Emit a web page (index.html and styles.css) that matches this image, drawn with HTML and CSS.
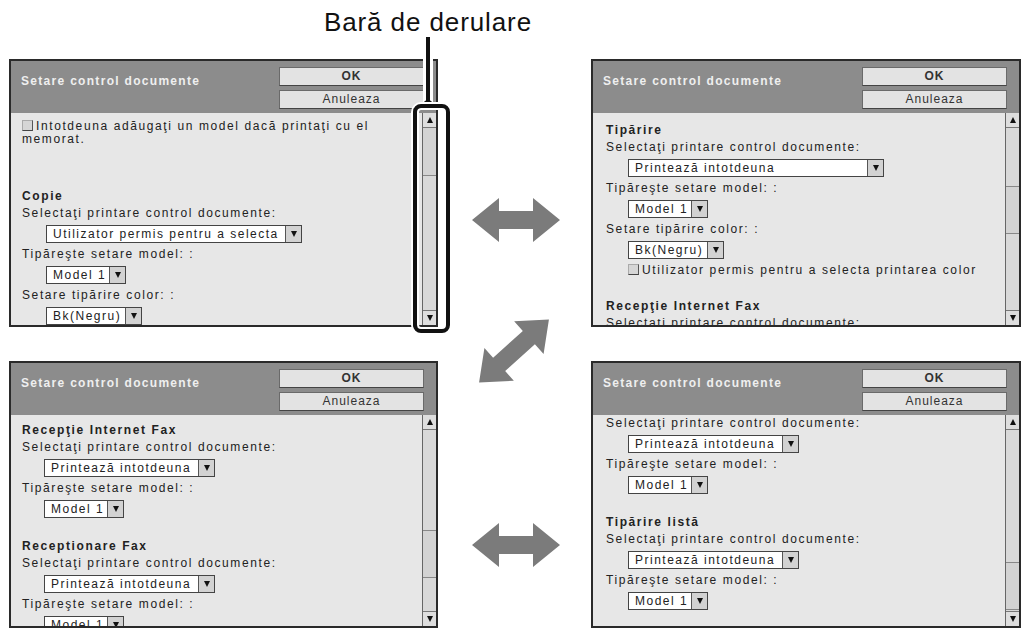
FILE: index.html
```html
<!DOCTYPE html>
<html>
<head>
<meta charset="utf-8">
<link rel="stylesheet" href="styles.css">
</head>
<body>
<div class="page">
  <!-- top-left -->
  <div class="panel tl">
    <div class="head">
      <div class="title">Setare control documente</div>
      <div class="btns"><div class="btn ok">OK</div><div class="btn">Anuleaza</div></div>
    </div>
    <div class="body">
      <div class="content">
        <div class="wrap"><span class="cb"></span>Intotdeuna adăugaţi un model dacă printaţi cu el memorat.</div>
        <div class="gap big"></div>
        <div class="h">Copie</div>
        <div class="l">Selectaţi printare control documente:</div>
        <div class="row"><div class="dd w255"><span class="v">Utilizator permis pentru a selecta</span><span class="a"><i class="tri dn"></i></span></div></div>
        <div class="l">Tipăreşte setare model: :</div>
        <div class="row"><div class="dd w80"><span class="v">Model 1</span><span class="a"><i class="tri dn"></i></span></div></div>
        <div class="l">Setare tipărire color: :</div>
        <div class="row"><div class="dd w95"><span class="v">Bk(Negru)</span><span class="a"><i class="tri dn"></i></span></div></div>
      </div>
      <div class="scroll">
        <div class="sb"><i class="tri up"></i></div>
        <div class="track"><div class="thumb t-tl"></div></div>
        <div class="sb"><i class="tri dn"></i></div>
      </div>
    </div>
    <div class="callout">
      <div class="clabel">Bară de derulare</div>
      <div class="cline"></div>
      <div class="cdot"></div>
      <div class="bracket"></div>
    </div>
  </div>

  <!-- middle arrows -->
  <div class="mid">
    <svg class="arr-h" width="88" height="44" viewBox="0 0 88 44"><polygon points="0,22 27,0 27,13 61,13 61,0 88,22 61,44 61,31 27,31 27,44" fill="#7b7b7b"/></svg>
    <svg class="arr-d" width="74" height="68" viewBox="0 0 74 68"><g transform="translate(37 34) rotate(-42)"><polygon points="-47,0 -20,-22 -20,-9 20,-9 20,-22 47,0 20,22 20,9 -20,9 -20,22" fill="#7b7b7b"/></g></svg>
    <svg class="arr-h2" width="88" height="44" viewBox="0 0 88 44"><polygon points="0,22 27,0 27,13 61,13 61,0 88,22 61,44 61,31 27,31 27,44" fill="#7b7b7b"/></svg>
  </div>

  <!-- top-right -->
  <div class="panel tr">
    <div class="head">
      <div class="title">Setare control documente</div>
      <div class="btns"><div class="btn ok">OK</div><div class="btn">Anuleaza</div></div>
    </div>
    <div class="body">
      <div class="content">
        <div class="h">Tipărire</div>
        <div class="l">Selectaţi printare control documente:</div>
        <div class="row"><div class="dd w255"><span class="v">Printează intotdeuna</span><span class="a"><i class="tri dn"></i></span></div></div>
        <div class="l">Tipăreşte setare model: :</div>
        <div class="row"><div class="dd w80"><span class="v">Model 1</span><span class="a"><i class="tri dn"></i></span></div></div>
        <div class="l">Setare tipărire color: :</div>
        <div class="row"><div class="dd w95"><span class="v">Bk(Negru)</span><span class="a"><i class="tri dn"></i></span></div></div>
        <div class="l ind"><span class="cb"></span>Utilizator permis pentru a selecta printarea color</div>
        <div class="gap"></div>
        <div class="h">Recepţie Internet Fax</div>
        <div class="l">Selectaţi printare control documente:</div>
      </div>
      <div class="scroll">
        <div class="sb"><i class="tri up"></i></div>
        <div class="track"><div class="thumb t-tr"></div></div>
        <div class="sb"><i class="tri dn"></i></div>
      </div>
    </div>
  </div>

  <!-- bottom-left -->
  <div class="panel bl">
    <div class="head">
      <div class="title">Setare control documente</div>
      <div class="btns"><div class="btn ok">OK</div><div class="btn">Anuleaza</div></div>
    </div>
    <div class="body">
      <div class="content">
        <div class="h">Recepţie Internet Fax</div>
        <div class="l">Selectaţi printare control documente:</div>
        <div class="row"><div class="dd w171"><span class="v">Printează intotdeuna</span><span class="a"><i class="tri dn"></i></span></div></div>
        <div class="l">Tipăreşte setare model: :</div>
        <div class="row"><div class="dd w80"><span class="v">Model 1</span><span class="a"><i class="tri dn"></i></span></div></div>
        <div class="gap"></div>
        <div class="h">Receptionare Fax</div>
        <div class="l">Selectaţi printare control documente:</div>
        <div class="row"><div class="dd w171"><span class="v">Printează intotdeuna</span><span class="a"><i class="tri dn"></i></span></div></div>
        <div class="l">Tipăreşte setare model: :</div>
        <div class="row"><div class="dd w80"><span class="v">Model 1</span><span class="a"><i class="tri dn"></i></span></div></div>
      </div>
      <div class="scroll">
        <div class="sb"><i class="tri up"></i></div>
        <div class="track"><div class="thumb t-bl"></div></div>
        <div class="sb"><i class="tri dn"></i></div>
      </div>
    </div>
  </div>

  <!-- bottom-right -->
  <div class="panel br">
    <div class="head">
      <div class="title">Setare control documente</div>
      <div class="btns"><div class="btn ok">OK</div><div class="btn">Anuleaza</div></div>
    </div>
    <div class="body">
      <div class="content scrolled">
        <div class="l">Selectaţi printare control documente:</div>
        <div class="row"><div class="dd w171"><span class="v">Printează intotdeuna</span><span class="a"><i class="tri dn"></i></span></div></div>
        <div class="l">Tipăreşte setare model: :</div>
        <div class="row"><div class="dd w80"><span class="v">Model 1</span><span class="a"><i class="tri dn"></i></span></div></div>
        <div class="gap"></div>
        <div class="h">Tipărire listă</div>
        <div class="l">Selectaţi printare control documente:</div>
        <div class="row"><div class="dd w171"><span class="v">Printează intotdeuna</span><span class="a"><i class="tri dn"></i></span></div></div>
        <div class="l">Tipăreşte setare model: :</div>
        <div class="row"><div class="dd w80"><span class="v">Model 1</span><span class="a"><i class="tri dn"></i></span></div></div>
      </div>
      <div class="scroll">
        <div class="sb"><i class="tri up"></i></div>
        <div class="track"><div class="thumb t-br"></div></div>
        <div class="sb"><i class="tri dn"></i></div>
      </div>
    </div>
  </div>
</div>
</body>
</html>
```

FILE: styles.css
```css
* { box-sizing: border-box; }
html, body { margin: 0; padding: 0; }
body {
  width: 1023px;
  height: 631px;
  overflow: hidden;
  background: #fff;
  font-family: "Liberation Sans", Arial, sans-serif;
  color: #222;
}
.page {
  display: grid;
  grid-template-columns: 429px 153px 430px;
  grid-template-rows: 268px 267px;
  row-gap: 34px;
  padding: 59px 0 0 9px;
}
.panel {
  border: 2px solid #2a2a2a;
  display: flex;
  flex-direction: column;
  position: relative;
  background: #e7e7e7;
}
.tl { grid-column: 1; grid-row: 1; }
.tr { grid-column: 3; grid-row: 1; }
.bl { grid-column: 1; grid-row: 2; }
.br { grid-column: 3; grid-row: 2; }

.head {
  flex: none;
  height: 52px;
  background: #8c8c8c;
  display: flex;
  justify-content: space-between;
  padding: 0 12px 0 10px;
}
.title {
  color: #efefef;
  font-weight: bold;
  font-size: 12px;
  letter-spacing: 1.3px;
  padding-top: 13px;
}
.btns {
  display: flex;
  flex-direction: column;
  gap: 4px;
  padding-top: 6px;
}
.btn {
  width: 145px;
  height: 19px;
  background: #e3e3e3;
  border: 1px solid #6a6a6a;
  border-bottom-color: #444;
  font-size: 12px;
  letter-spacing: 1px;
  line-height: 17px;
  text-align: center;
  color: #333;
}
.btn.ok { font-weight: bold; }

.body {
  flex: 1;
  min-height: 0;
  display: flex;
  overflow: hidden;
}
.content {
  flex: 1;
  min-width: 0;
  overflow: hidden;
  padding: 7px 0 0 11px;
  font-size: 12px;
  letter-spacing: 1.6px;
}
.tr .content { padding-top: 9px; padding-left: 13px; }
.br .content { padding-left: 13px; }
.content.scrolled { padding-top: 0; margin-top: -1px; }

.wrap { line-height: 13px; padding-right: 18px; }
.h { font-weight: bold; line-height: 16px; white-space: nowrap; }
.l { line-height: 19px; white-space: nowrap; }
.l.ind { padding-left: 22px; }
.row { height: 22px; padding-left: 22px; display: flex; align-items: center; }
.tl .row { padding-left: 24px; }
.gap { height: 18px; }
.gap.big { height: 42px; }

.dd {
  display: flex;
  height: 18px;
  border: 1px solid #444;
  background: #fff;
  letter-spacing: 1.5px;
}
.w255 { width: 256px; }
.w171 { width: 171px; }
.w80 { width: 80px; }
.w95 { width: 96px; }
.dd .v {
  flex: 1;
  padding: 0 2px 0 6px;
  line-height: 16px;
  white-space: nowrap;
  overflow: hidden;
}
.dd .a {
  width: 16px;
  flex: none;
  border-left: 1px solid #555;
  background: #d2d2d2;
  display: flex;
  align-items: center;
  justify-content: center;
}
.tri {
  display: block;
  width: 0;
  height: 0;
  border-left: 3.5px solid transparent;
  border-right: 3.5px solid transparent;
}
.tri.dn { border-top: 6px solid #111; }
.tri.up { border-bottom: 6px solid #111; }

.cb {
  display: inline-block;
  width: 11px;
  height: 11px;
  margin-right: 3px;
  vertical-align: -1px;
  background: #d6d6d6;
  border-left: 1px solid #aaa;
  border-top: 1px solid #aaa;
  border-right: 1px solid #555;
  border-bottom: 1px solid #444;
}

.scroll {
  flex: none;
  width: 14px;
  display: flex;
  flex-direction: column;
  border-left: 1px solid #666;
  background: #d9d9d9;
}
.sb {
  flex: none;
  height: 15px;
  display: flex;
  align-items: center;
  justify-content: center;
  background: #dedede;
}
.sb:first-child { border-bottom: 1px solid #777; }
.sb:last-child { border-top: 1px solid #777; }
.track { flex: 1; }
.thumb {
  height: 48px;
  border-top: 1px solid #888;
  border-bottom: 1px solid #888;
  background: #d3d3d3;
}
.t-tl { margin-top: 0; border-top: none; }
.t-tr { margin-top: 58px; }
.t-bl { margin-top: 100px; }
.t-br { margin-top: 132px; }

/* middle arrows */
.mid {
  grid-column: 2;
  grid-row: 1 / span 2;
  display: flex;
  flex-direction: column;
  align-items: center;
  padding-top: 139px;
}
.arr-h { display: block; margin-left: 3px; }
.arr-d { display: block; margin-top: 75px; margin-left: -1px; }
.arr-h2 { display: block; margin-top: 138px; margin-left: 3px; }

/* callout */
.callout { position: absolute; left: 0; top: 0; width: 0; height: 0; }
.clabel {
  position: absolute;
  left: 267px;
  top: -54px;
  width: 300px;
  text-align: center;
  font-size: 26px;
  letter-spacing: 0.9px;
  line-height: 30px;
  color: #111;
  white-space: nowrap;
}
.cline {
  position: absolute;
  left: 415px;
  top: -24px;
  width: 4px;
  height: 68px;
  background: #111;
  box-shadow: 0 0 0 3px #fff;
}
.cdot {
  position: absolute;
  left: 412px;
  top: 39px;
  width: 10px;
  height: 10px;
  border-radius: 50%;
  background: #111;
}
.bracket {
  position: absolute;
  left: 402px;
  top: 43px;
  width: 37px;
  height: 229px;
  border: 4px solid #111;
  border-radius: 8px;
  box-shadow: 0 0 0 2px #fff, inset 0 0 0 2px #fff;
}
```
